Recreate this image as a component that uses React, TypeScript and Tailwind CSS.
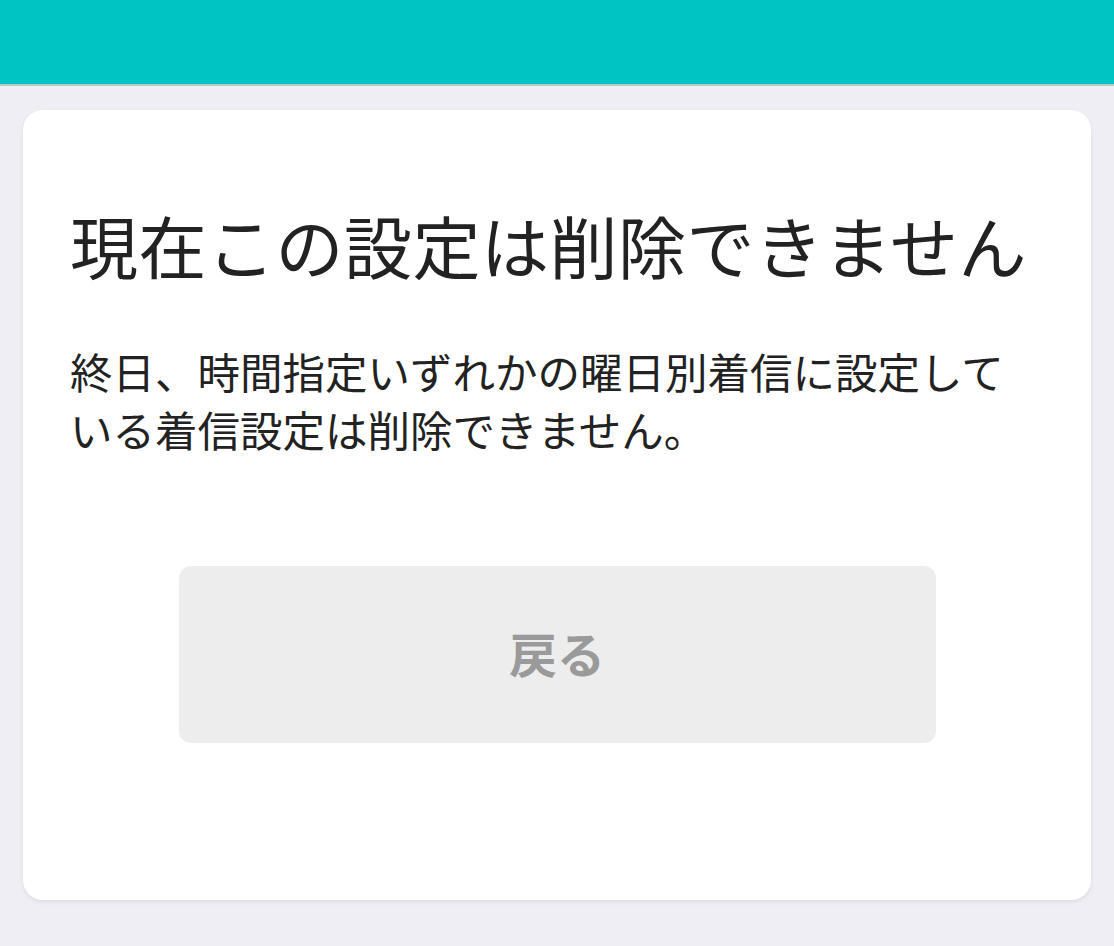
export default function App() {
   return (
      <div
         className="min-h-[946px] w-full bg-[#efeef4]"
         style={{ fontFamily: '"Noto Sans CJK JP", "Noto Sans", sans-serif' }}>
         {/* Header bar */}
         <div className="h-[86px] bg-[#00c3c3] border-b-2 border-[#b9c7c7]" />

         {/* Dialog card */}
         <div className="px-[23px] pt-[24px]">
            <div className="h-[790px] rounded-[20px] bg-white shadow-[0_2px_4px_rgba(0,0,0,0.08)] px-[47px] pt-[94px]">
               <h1 className="text-[68px] leading-[82px] font-normal tracking-[0.5px] text-[#222222] whitespace-nowrap">
                  現在この設定は削除できません
               </h1>
               <p className="mt-[56px] text-[42.5px] leading-[58px] text-[#222222]">
                  終日、時間指定いずれかの曜日別着信に設定して
                  <br />
                  いる着信設定は削除できません。
               </p>
               <div className="mt-[108px] flex justify-center">
                  <button className="w-[757px] h-[177px] pb-[6px] rounded-[12px] bg-[#ededed] text-[48px] font-bold text-[#9a9a9a]">
                     戻る
                  </button>
               </div>
            </div>
         </div>
      </div>
   );
}
